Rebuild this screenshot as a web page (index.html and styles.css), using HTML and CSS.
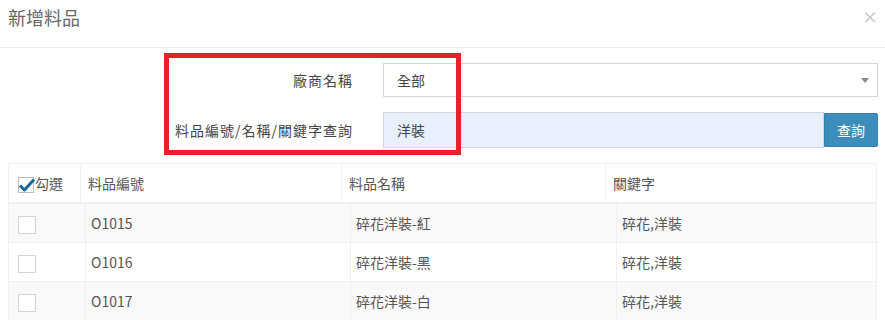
FILE: index.html
```html
<!DOCTYPE html>
<html lang="zh-Hant">
<head>
  <meta charset="UTF-8"/>
  <title>新增料品</title>
  <link rel="stylesheet" href="styles.css">
</head>
<body>
  <div class="modal">
    <div class="modal-header">
      <h4 class="modal-title">新增料品</h4>
      <span class="close">×</span>
    </div>

    <form class="search">
      <div class="search-row">
        <label class="search-label">廠商名稱</label>
        <div class="select">全部<span class="caret"></span></div>
      </div>
      <div class="search-row">
        <label class="search-label">料品編號/名稱/關鍵字查詢</label>
        <div class="input-group">
          <input type="text" class="keyword" value="洋裝" />
          <button type="button" class="btn-search">查詢</button>
        </div>
      </div>
      <div class="highlight"></div>
    </form>

    <table class="grid grid-head">
      <tr>
        <th class="col-check">
          <span class="check checked">
            <svg width="18" height="16" viewBox="0 0 18 16"><path d="M2 8.5 L6.5 13 L16 2.5" fill="none" stroke="#15689c" stroke-width="3" stroke-linejoin="round"/></svg>
          </span>勾選
        </th>
        <th class="col-code">料品編號</th>
        <th class="col-name">料品名稱</th>
        <th>關鍵字</th>
      </tr>
    </table>

    <table class="grid grid-body">
      <tr>
        <td class="col-check"><span class="check"></span></td>
        <td class="col-code">O1015</td>
        <td class="col-name">碎花洋裝-紅</td>
        <td>碎花,洋裝</td>
      </tr>
      <tr>
        <td class="col-check"><span class="check"></span></td>
        <td class="col-code">O1016</td>
        <td class="col-name">碎花洋裝-黑</td>
        <td>碎花,洋裝</td>
      </tr>
      <tr>
        <td class="col-check"><span class="check"></span></td>
        <td class="col-code">O1017</td>
        <td class="col-name">碎花洋裝-白</td>
        <td>碎花,洋裝</td>
      </tr>
    </table>
  </div>
</body>
</html>
```

FILE: styles.css
```css
body {
  margin: 0;
  background-color: #fff;
  font-family: "Noto Sans CJK TC", "Noto Sans", sans-serif;
  font-size: 14px;
  color: #555;
  overflow: hidden;
}
.modal-header {
  display: flex;
  justify-content: space-between;
  align-items: center;
  height: 47px;
  padding: 0 7px 0 8px;
  border-bottom: 1px solid #eeeeee;
}
.modal-title {
  margin: 0 0 14px 0;
  font-size: 18px;
  font-weight: normal;
  color: #666;
}
.close {
  font-size: 16px;
  font-weight: bold;
  color: #000;
  opacity: 0.2;
  margin-bottom: 16px;
  line-height: 1;
}
.search {
  position: relative;
  margin: 15px 7px 15px 0;
  display: grid;
  row-gap: 15px;
}
.search-row {
  display: grid;
  grid-template-columns: 352px 1fr;
  column-gap: 31px;
  align-items: center;
}
.search-label {
  text-align: right;
  color: #444;
  letter-spacing: 1px;
  margin-right: -1px;
}
.select {
  display: flex;
  align-items: center;
  justify-content: space-between;
  height: 34px;
  box-sizing: border-box;
  padding: 0 8px 0 13px;
  border: 1px solid #d2d6de;
  background-color: #fff;
  color: #444;
}
.caret {
  width: 0;
  height: 0;
  border-left: 4px solid transparent;
  border-right: 4px solid transparent;
  border-top: 5px solid #888;
}
.input-group {
  display: flex;
  align-items: center;
}
.keyword {
  flex: 1;
  height: 36px;
  box-sizing: border-box;
  border: 1px solid #d2d6de;
  background-color: #e8f0fe;
  padding: 0 13px;
  font-family: inherit;
  font-size: 14px;
  color: #444;
  outline: none;
}
.btn-search {
  width: 54px;
  height: 34px;
  border: 1px solid #367fa9;
  border-radius: 0 2px 2px 0;
  background-color: #3c8dbc;
  color: #fff;
  font-family: inherit;
  font-size: 14px;
  padding: 0;
}
.highlight {
  position: absolute;
  left: 164px;
  top: -10px;
  width: 297px;
  height: 102px;
  box-sizing: border-box;
  border: 5px solid #e8202a;
  pointer-events: none;
}
.grid {
  border-collapse: collapse;
  table-layout: fixed;
  margin-left: 8px;
  width: 869px;
}
.grid th,
.grid td {
  height: 38px;
  padding: 0 7px;
  text-align: left;
  font-weight: normal;
  border: 1px solid #f0f0f0;
  white-space: nowrap;
}
.grid-head th {
  background-color: #fff;
  color: #555;
}
.grid-head .col-check { width: 62px; padding: 0 0 0 9px; }
.grid-head .col-code { width: 246px; }
.grid-head .col-name { width: 249px; }
.grid-body td {
  color: #555;
  padding: 0 5px;
}
.grid-body .col-check { width: 67px; padding: 0 0 0 9px; }
.grid-body .col-code { width: 254px; }
.grid-body .col-name { width: 255px; }
.grid-body tr:nth-child(odd) td {
  background-color: #f9f9f9;
}
.grid-body tr:nth-child(even) td {
  background-color: #fff;
}
.check {
  display: inline-block;
  position: relative;
  vertical-align: middle;
  width: 18px;
  height: 18px;
  box-sizing: border-box;
  border: 1px solid #d4d4d4;
  background-color: #fff;
}
.check.checked {
  width: 16px;
  height: 16px;
  border-color: #bbb;
  margin-right: 1px;
}
.check svg {
  position: absolute;
  left: -1px;
  top: -1px;
}
```
